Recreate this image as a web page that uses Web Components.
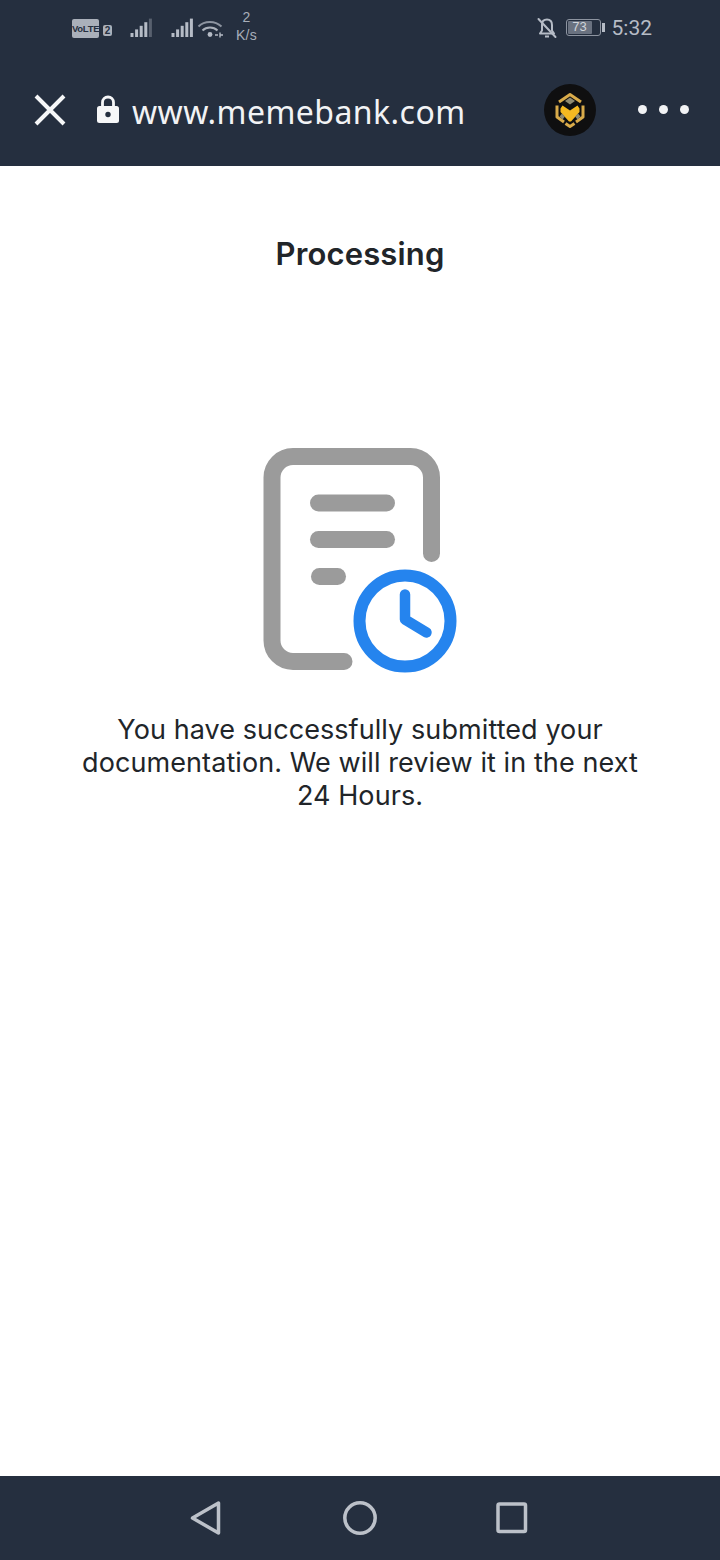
<!doctype html>
<html>
<head>
<meta charset="utf-8">
<title>Processing</title>
<style>
  html, body { margin: 0; padding: 0; background: #fff; }
  body { font-family: Inter, "Liberation Sans", sans-serif; }
  #app { display: flex; flex-direction: column; height: 1560px; }
</style>
</head>
<body>
<div id="app">
  <status-bar></status-bar>
  <browser-toolbar url="www.memebank.com"></browser-toolbar>
  <processing-panel heading="Processing">
    You have successfully submitted your documentation. We will review it in the next 24 Hours.
  </processing-panel>
  <nav-bar></nav-bar>
</div>

<script>
const html = String.raw;

function signalBars(lit) {
  // five bars rising left to right, the last ones dimmer when not lit
  let bars = "";
  for (let i = 0; i < 5; i++) {
    const h = 4 + i * 3.6;
    const x = 0.5 + i * 4.6;
    const opacity = i < lit ? 1 : 0.35;
    bars += `<rect x="${x}" y="${19 - h}" width="3" height="${h}" fill="#b6bcc6" opacity="${opacity}"/>`;
  }
  return `<svg width="23" height="20" viewBox="0 0 23 20">${bars}</svg>`;
}

class StatusBar extends HTMLElement {
  constructor() {
    super();
    this.attachShadow({ mode: "open" });
    this.shadowRoot.innerHTML = html`
      <style>
        :host {
          display: flex;
          align-items: center;
          height: 56px;
          padding: 0 68px 0 72px;
          background: #252f3f;
          color: #b6bcc6;
          font-family: "Liberation Sans", sans-serif;
        }
        .volte {
          width: 27px;
          height: 19px;
          border-radius: 2px;
          background: #aab0ba;
          color: #252f3f;
          font: bold 9.5px/19px "Liberation Sans", sans-serif;
          text-align: center;
          letter-spacing: -0.3px;
          white-space: nowrap;
          overflow: hidden;
        }
        .sim {
          width: 9px;
          height: 11px;
          margin: 5px 0 0 4px;
          border-radius: 2px;
          background: #aab0ba;
          color: #252f3f;
          font: bold 10px/11px "Liberation Sans", sans-serif;
          text-align: center;
        }
        .sig1 { margin: 0 0 0 18px; display: flex; }
        .sig2 { margin: 0 0 0 18px; display: flex; }
        .wifi { margin: 2px 0 0 3px; display: flex; }
        .speed {
          margin: -4px 0 0 11px;
          width: 23px;
          font-size: 14px;
          line-height: 18px;
          text-align: center;
          letter-spacing: 0.3px;
          white-space: nowrap;
          color: #a8aeb9;
        }
        .spacer { flex: 1; }
        .bell { display: flex; }
        .battery {
          display: flex;
          align-items: center;
          margin-left: 9px;
          margin-top: -1px;
        }
        .cell {
          width: 35px;
          height: 17px;
          box-sizing: border-box;
          border: 1.5px solid #8d94a0;
          border-radius: 3px;
          padding: 1px;
        }
        .fill {
          width: 24px;
          height: 100%;
          background: #6a7280;
          color: #d0d4da;
          font-size: 13px;
          line-height: 12px;
          text-align: center;
          border-radius: 1px;
        }
        .nub { width: 3px; height: 9px; margin-left: 1px; background: #b6bcc6; }
        .time {
          margin-left: 7px;
          font: 400 21px/1 Roboto, sans-serif;
        }
      </style>
      <div class="volte">VoLTE</div>
      <div class="sim">2</div>
      <div class="sig1">${signalBars(4)}</div>
      <div class="sig2">${signalBars(5)}</div>
      <div class="wifi">
        <svg width="27" height="20" viewBox="0 0 27 20" fill="none" stroke="#8d94a0" stroke-width="2">
          <path d="M1.5 7.5 C7.5 1.5 18 1.5 24.5 7.5"/>
          <path d="M5.5 11.5 C9.5 7.5 16.5 7.5 20.5 11.5" stroke="#aab0ba"/>
          <circle cx="13" cy="15.5" r="2.4" fill="#b6bcc6" stroke="none"/>
          <path d="M18 16h3M23 13.5v5M23 16h3" stroke="#b6bcc6" stroke-width="1.4"/>
        </svg>
      </div>
      <div class="speed">2<br>K/s</div>
      <div class="spacer"></div>
      <div class="bell">
        <svg width="20" height="22" viewBox="0 0 20 22" fill="none" stroke="#b6bcc6" stroke-width="2" stroke-linejoin="round">
          <path d="M5 7.5 C5 4.5 7 2.5 10 2.5 C13 2.5 15 4.5 15 8 V13.5 L17 16.5 H3 L5 13.5 Z"/>
          <path d="M8 19.5 H12"/>
          <path d="M1.5 2 L18.5 20" stroke-linecap="round"/>
        </svg>
      </div>
      <div class="battery">
        <div class="cell"><div class="fill">73</div></div>
        <div class="nub"></div>
      </div>
      <div class="time">5:32</div>
    `;
  }
}

class BrowserToolbar extends HTMLElement {
  constructor() {
    super();
    this.attachShadow({ mode: "open" });
    this.shadowRoot.innerHTML = html`
      <style>
        :host {
          display: flex;
          align-items: center;
          height: 110px;
          padding: 0 31px 0 34px;
          box-sizing: border-box;
          background: #252f3f;
          color: #fff;
        }
        .close { display: flex; margin-top: -3px; }
        .lock { display: flex; margin-left: 31px; margin-top: -4px; }
        .url {
          margin: 1px 0 0 13px;
          font: 400 32px/1 "Noto Sans", Roboto, sans-serif;
          letter-spacing: 0.45px;
          color: #f2f3f5;
          flex: 1;
        }
        .logo { display: flex; margin-right: 42px; margin-top: -3px; }
        .more { display: flex; gap: 12px; margin-top: -4px; }
        .more span { width: 9px; height: 9px; border-radius: 50%; background: #f2f3f5; }
      </style>
      <div class="close">
        <svg width="32" height="32" viewBox="0 0 32 32" stroke="#f6f7f8" stroke-width="4" fill="none">
          <path d="M2 2 L30 30 M30 2 L2 30"/>
        </svg>
      </div>
      <div class="lock">
        <svg width="22" height="29" viewBox="0 0 22 29">
          <path d="M5.5 12 V7.5 a5.5 5.5 0 0 1 11 0 V12" fill="none" stroke="#f6f7f8" stroke-width="2.8"/>
          <rect x="0" y="11" width="22" height="17" rx="2.5" fill="#f6f7f8"/>
          <circle cx="11" cy="19.5" r="2.7" fill="#252f3f"/>
        </svg>
      </div>
      <div class="url"></div>
      <div class="logo">
        <svg width="52" height="52" viewBox="0 0 52 52">
          <circle cx="26" cy="26" r="26" fill="#0f0f10"/>
          <g fill="none" stroke="#d9ab4a" stroke-width="3" stroke-linejoin="round">
            <path d="M15 18 L26 10.5 L37 18"/>
            <path d="M13 21.5 V33 L20 38"/>
            <path d="M39 21.5 V33 L32 38"/>
            <path d="M21.5 39.5 L26 42.5 L30.5 39.5"/>
          </g>
          <path d="M18.5 21.5 L26 26.5 L33.5 21.5 L35.5 24.5 V28 L27 37.5 H25 L16.5 28 V24.5 Z" fill="#f5b921"/>
          <path d="M26 13.5 L31 17 L26 20.5 L21 17 Z" fill="#8f8a70"/>
          <path d="M18 29.5 L21 32.5 L18.5 35.5 L15.5 32.5 Z M34 29.5 L31 32.5 L33.5 35.5 L36.5 32.5 Z" fill="#8f8a70"/>
        </svg>
      </div>
      <div class="more"><span></span><span></span><span></span></div>
    `;
    this.shadowRoot.querySelector(".url").textContent = this.getAttribute("url");
  }
}

class ProcessingPanel extends HTMLElement {
  constructor() {
    super();
    this.attachShadow({ mode: "open" });
    this.shadowRoot.innerHTML = html`
      <style>
        :host {
          display: flex;
          flex-direction: column;
          align-items: center;
          flex: 1;
          background: #fff;
          color: #212529;
          font-family: Inter, "Liberation Sans", sans-serif;
        }
        h1 {
          margin: 70px 0 0;
          font-size: 31px;
          font-weight: 600;
          line-height: 36px;
          letter-spacing: 0.15px;
        }
        svg { display: block; margin-top: 175px; }
        p {
          width: 570px;
          margin: 40px 0 0;
          font-size: 27px;
          line-height: 33px;
          text-align: center;
          letter-spacing: 0.08px;
        }
      </style>
      <h1></h1>
      <svg width="194" height="226" viewBox="263 447 194 226" fill="none" stroke-linecap="round">
        <g stroke="#9b9b9b" stroke-width="17">
          <path d="M344 661.5 H293 a21 21 0 0 1 -21 -21 V477.5 a21 21 0 0 1 21 -21 H410.5 a21 21 0 0 1 21 21 V553.5"/>
          <path d="M318.5 503 H386.5"/>
          <path d="M318.5 539.5 H386.5"/>
          <path d="M319.5 576.5 H337.5"/>
        </g>
        <circle cx="405" cy="621" r="45.5" stroke="#2584ee" stroke-width="12"/>
        <path d="M405 594.5 V619.5 L426.5 632.5" stroke="#2584ee" stroke-width="10.5" stroke-linejoin="round"/>
      </svg>
      <p><slot></slot></p>
    `;
    this.shadowRoot.querySelector("h1").textContent = this.getAttribute("heading");
  }
}

class NavBar extends HTMLElement {
  constructor() {
    super();
    this.attachShadow({ mode: "open" });
    this.shadowRoot.innerHTML = html`
      <style>
        :host {
          display: flex;
          align-items: center;
          justify-content: center;
          height: 84px;
          background: #252f3f;
        }
        svg { display: block; }
      </style>
      <svg width="380" height="84" viewBox="170 1476 380 84" fill="none" stroke="#bcc1c9" stroke-width="3.5" stroke-linejoin="round">
        <path d="M192.5 1518 L218.5 1503 V1533 Z"/>
        <circle cx="360" cy="1518" r="15.2"/>
        <rect x="498" y="1504" width="27.5" height="27.5" rx="1.5"/>
      </svg>
    `;
  }
}

customElements.define("status-bar", StatusBar);
customElements.define("browser-toolbar", BrowserToolbar);
customElements.define("processing-panel", ProcessingPanel);
customElements.define("nav-bar", NavBar);
</script>
</body>
</html>
